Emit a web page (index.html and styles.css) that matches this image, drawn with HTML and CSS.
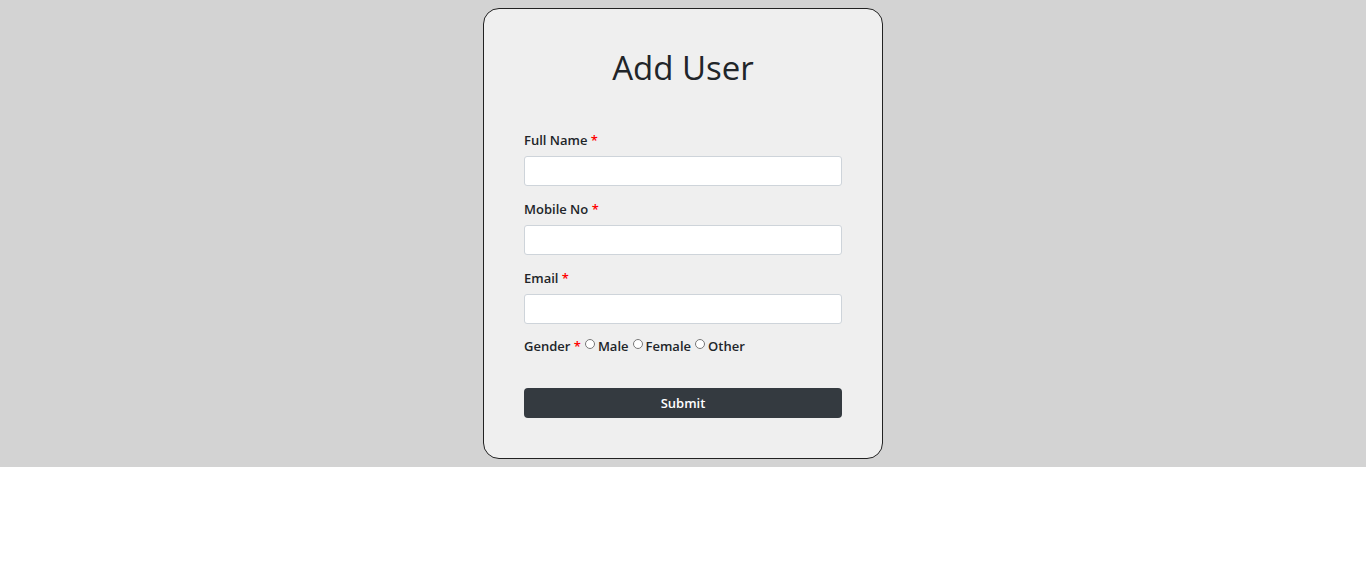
FILE: index.html
```html
<!DOCTYPE html>
<html>
<head>
<meta charset="utf-8">
<link rel="stylesheet" href="styles.css">
</head>
<body>
<div class="backdrop">
  <form class="card">
    <h1 class="title">Add User</h1>
    <div class="field">
      <label class="label">Full Name <span class="req">*</span></label>
      <input class="input" type="text">
    </div>
    <div class="field">
      <label class="label">Mobile No <span class="req">*</span></label>
      <input class="input" type="text">
    </div>
    <div class="field">
      <label class="label">Email <span class="req">*</span></label>
      <input class="input" type="email">
    </div>
    <div class="gender">
      <span>Gender <span class="req">*</span></span>
      <input class="radio" type="radio" name="g"><span>Male</span>
      <input class="radio" type="radio" name="g"><span>Female</span>
      <input class="radio" type="radio" name="g"><span>Other</span>
    </div>
    <button class="submit" type="button">Submit</button>
  </form>
</div>
</body>
</html>
```
FILE: styles.css
```css
html, body { margin: 0; padding: 0; background: #fff; }
body { font-family: "Open Sans", "Noto Sans", sans-serif; color: #212529; }
.backdrop {
  background: #d3d3d3;
  padding: 8px 0;
  display: flex;
  justify-content: center;
}
.card {
  width: 400px;
  box-sizing: border-box;
  background: #efefef;
  border: 1px solid #222;
  border-radius: 16px;
  padding: 40px;
  display: flex;
  flex-direction: column;
}
.title {
  margin: 0 0 43px;
  font-size: 33px;
  line-height: 38px;
  font-weight: 500;
  text-align: center;
  color: #212529;
}
.field { display: flex; flex-direction: column; margin-bottom: 13px; }
.label {
  font-size: 13px;
  line-height: 20px;
  font-weight: 600;
  margin-bottom: 6px;
}
.req { color: #ff0000; }
.input {
  height: 30px;
  box-sizing: border-box;
  border: 1px solid #ced4da;
  border-radius: 3px;
  background: #fff;
  margin: 0;
}
.gender {
  font-size: 13px;
  line-height: 18px;
  font-weight: 600;
  display: flex;
  align-items: center;
}
.radio {
  width: 10px;
  height: 10px;
  margin: 0 3px 4px 4px;
}
.submit {
  margin-top: 33px;
  height: 30px;
  background: #343a40;
  color: #fff;
  border: none;
  border-radius: 4px;
  font-family: inherit;
  font-size: 13px;
  font-weight: 600;
}
```
